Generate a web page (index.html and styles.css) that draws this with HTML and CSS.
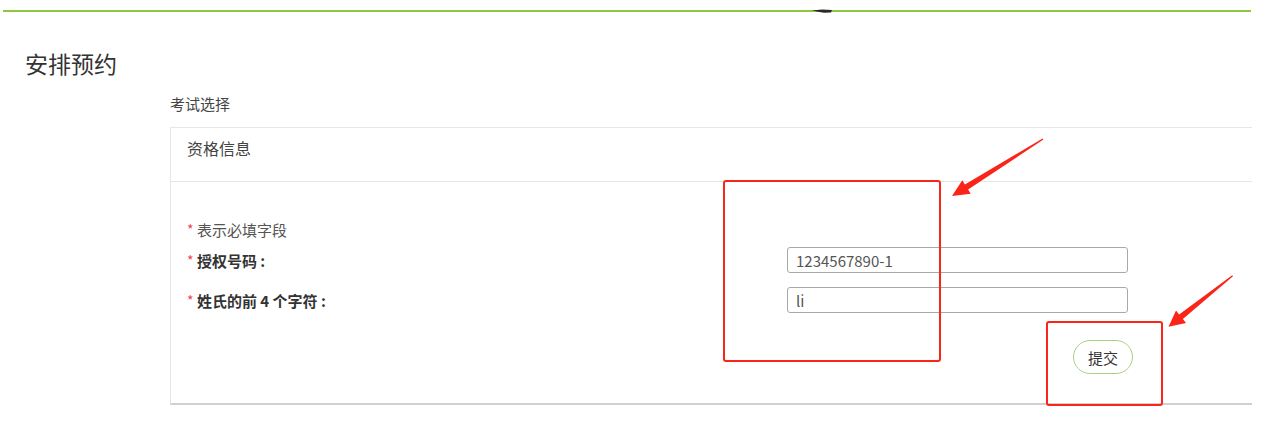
FILE: index.html
```html
<!DOCTYPE html>
<html>
<head>
  <meta charset="utf-8">
  <title>安排预约</title>
  <link rel="stylesheet" href="styles.css">
</head>
<body>

  <div class="topbar"></div>

  <h1 class="page-title">安排预约</h1>

  <div class="section">
    <div class="section-title">考试选择</div>

    <div class="card">
      <div class="card-head">资格信息</div>
      <form class="card-body">
        <p class="note"><span class="star">*</span> 表示必填字段</p>

        <div class="row">
          <label class="label" for="auth"><span class="star">*</span> 授权号码 :</label>
          <input type="text" id="auth" class="field" value="1234567890-1">
        </div>

        <div class="row">
          <label class="label" for="name4"><span class="star">*</span> 姓氏的前 4 个字符 :</label>
          <input type="text" id="name4" class="field" value="li">
        </div>

        <div class="actions">
          <button type="button" class="btn">提交</button>
        </div>
      </form>
    </div>
  </div>

  <!-- annotations drawn on top of the screenshot -->
  <svg class="marks" width="1281" height="428" viewBox="0 0 1281 428">
    <path d="M812 10.5 L822 9.5 L832 10 L831 12.5 L824 12.8 L818 11.8 Z" fill="#2a2a2a"/>
    <rect x="724" y="181" width="216" height="180" rx="2" fill="none" stroke="#fb2418" stroke-width="2"/>
    <rect x="1047" y="322" width="115" height="83" rx="2" fill="none" stroke="#fb2418" stroke-width="2"/>
    <polygon fill="#fb2418" points="1043.4,139.6 968.1,189.6 970.7,193.8 952,196 962.3,180.2 964.9,184.5 1042.6,138.4"/>
    <polygon fill="#fb2418" points="1233,276.3 1182.9,319.1 1186,323 1168.5,326.7 1176,310.6 1179.1,314.5 1232.2,275.2"/>
  </svg>

</body>
</html>
```

FILE: styles.css
```css
body {
  margin: 0;
  font-family: "Noto Sans CJK SC", "Noto Sans", sans-serif;
  color: #333;
  background: #fff;
}

.topbar {
  margin: 10px 30px 0 3px;
  height: 2px;
  background: #8dc63f;
}

.page-title {
  margin: 36px 0 0 25px;
  font-size: 23px;
  font-weight: normal;
  line-height: 30px;
  color: #333;
}

.section {
  margin: 16px 0 0 170px;
}

.section-title {
  font-size: 15px;
  line-height: 20px;
  color: #444;
}

.card {
  margin-top: 13px;
  width: 1081px;
  border-top: 1px solid #e6e6e6;
  border-left: 1px solid #e6e6e6;
  border-bottom: 2px solid #d0d0d0;
}

.card-head {
  height: 33px;
  padding: 10px 16px;
  font-size: 16px;
  line-height: 20px;
  color: #444;
  border-bottom: 1px solid #e6e6e6;
}

.card-body {
  width: 946px;
  padding: 38px 16px 29px 16px;
}

.note {
  margin: 0;
  font-size: 15px;
  line-height: 20px;
  color: #555;
}

.star {
  color: #f0444a;
  font-weight: normal;
  font-size: 14px;
  position: relative;
  top: -1px;
}

.row {
  display: flex;
  align-items: center;
  margin-top: 7px;
}

.row + .row {
  margin-top: 14px;
}

.label {
  width: 600px;
  font-size: 15px;
  font-weight: bold;
  color: #333;
  line-height: 20px;
  position: relative;
  top: 1px;
}

.field {
  width: 341px;
  height: 26px;
  box-sizing: border-box;
  padding: 0 8px;
  border: 1px solid #a9a9a9;
  border-radius: 3px;
  font-family: "Noto Sans CJK SC", "Noto Sans", sans-serif;
  font-size: 15px;
  color: #555;
  background: #fff;
}

.actions {
  display: flex;
  justify-content: flex-end;
  margin-top: 27px;
}

.btn {
  width: 60px;
  height: 34px;
  padding: 0;
  border: 1px solid #a9d27f;
  border-radius: 17px;
  background: #fff;
  font-family: "Noto Sans CJK SC", sans-serif;
  font-size: 15px;
  color: #333;
  cursor: pointer;
}

.marks {
  position: absolute;
  left: 0;
  top: 0;
  pointer-events: none;
}
```
